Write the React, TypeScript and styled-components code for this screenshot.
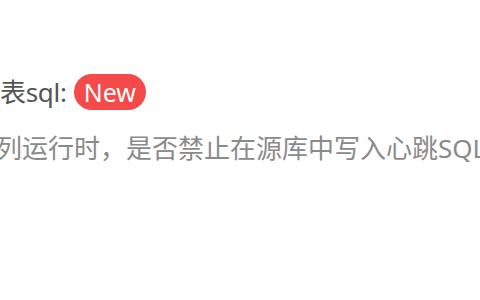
import styled, { createGlobalStyle } from "styled-components";

const GlobalStyle = createGlobalStyle`
  html, body {
    margin: 0;
    padding: 0;
    background: #fff;
    overflow: hidden;
  }
  body {
    font-family: "Noto Sans", "Noto Sans CJK SC", sans-serif;
  }
`;

const Page = styled.div`
  width: 480px;
  height: 300px;
  padding-top: 74px;
  box-sizing: border-box;
  overflow: hidden;
`;

const TitleRow = styled.div`
  display: flex;
  align-items: center;
  gap: 7px;
  height: 36px;
`;

const Label = styled.span`
  font-size: 26px;
  line-height: 36px;
  color: #555;
  white-space: nowrap;
  letter-spacing: -0.3px;
`;

const Badge = styled.span<{ $bg?: string }>`
  display: inline-flex;
  align-items: center;
  height: 36px;
  padding: 0 10px;
  border-radius: 18px;
  background: ${(p) => p.$bg || "#f44a4a"};
  color: #fff;
  font-size: 25px;
  white-space: nowrap;
`;

const Desc = styled.p`
  margin: 20px 0 0;
  font-size: 26px;
  line-height: 36px;
  color: #8a8a8a;
  white-space: nowrap;
  text-indent: -4px;
`;

export default function App() {
  return (
    <>
      <GlobalStyle />
      <Page>
        <TitleRow>
          <Label>表sql:</Label>
          <Badge>New</Badge>
        </TitleRow>
        <Desc>列运行时，是否禁止在源库中写入心跳SQL</Desc>
      </Page>
    </>
  );
}
